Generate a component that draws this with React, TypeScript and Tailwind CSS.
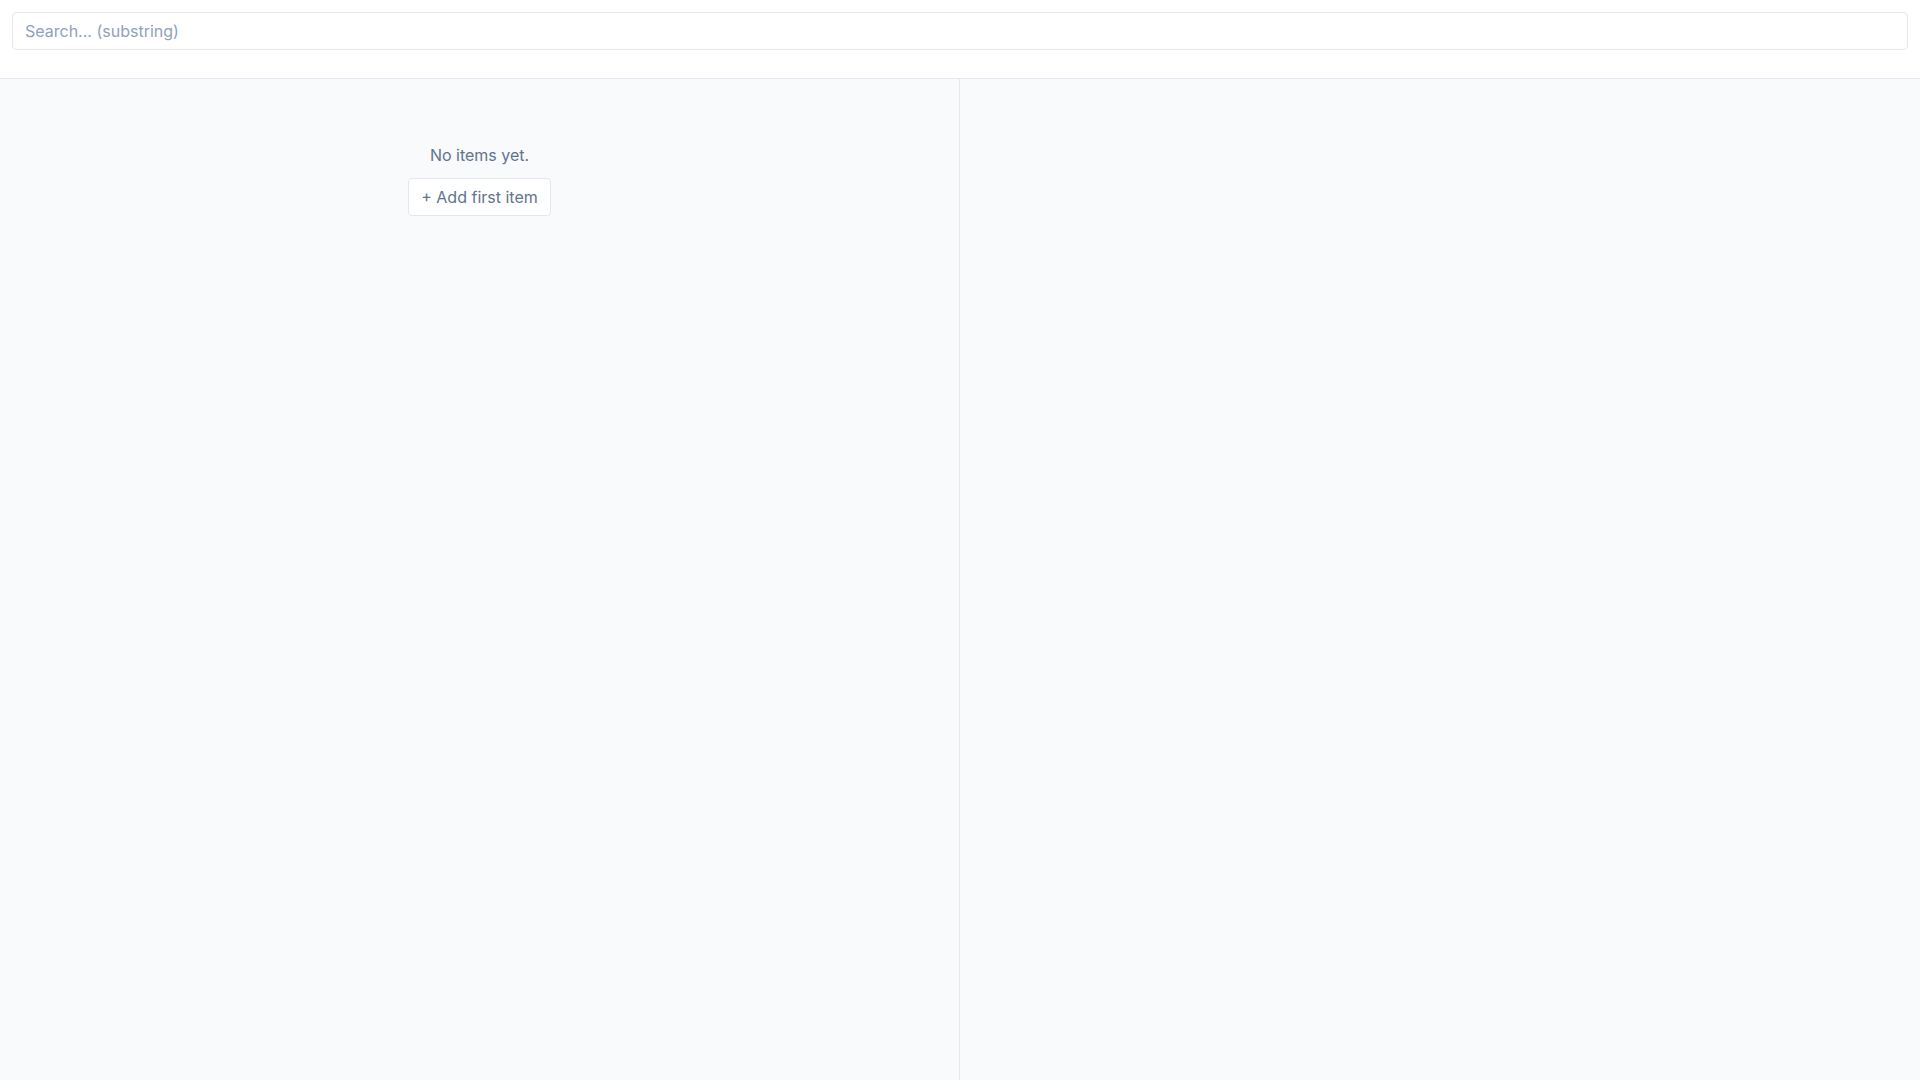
export default function App() {
  return (
    <div className="flex h-screen flex-col bg-white text-slate-500" style={{ fontFamily: 'Inter, "Noto Sans", sans-serif' }}>
      <header className="border-b border-slate-200 px-3 pt-3 pb-[28px]">
        <input
          className="h-[38px] w-full rounded border border-slate-200 bg-white px-3 text-base text-slate-700 outline-none placeholder-slate-400"
          placeholder="Search... (substring)"
        />
      </header>
      <div className="grid flex-1 grid-cols-2 bg-slate-50">
        <section className="flex flex-col items-center border-r border-slate-200 pt-[64px]">
          <p className="text-base leading-6">No items yet.</p>
          <button className="mt-[11px] h-[38px] rounded-sm border border-slate-200 bg-white px-3 text-base text-slate-500">
            + Add first item
          </button>
        </section>
        <section />
      </div>
    </div>
  )
}
